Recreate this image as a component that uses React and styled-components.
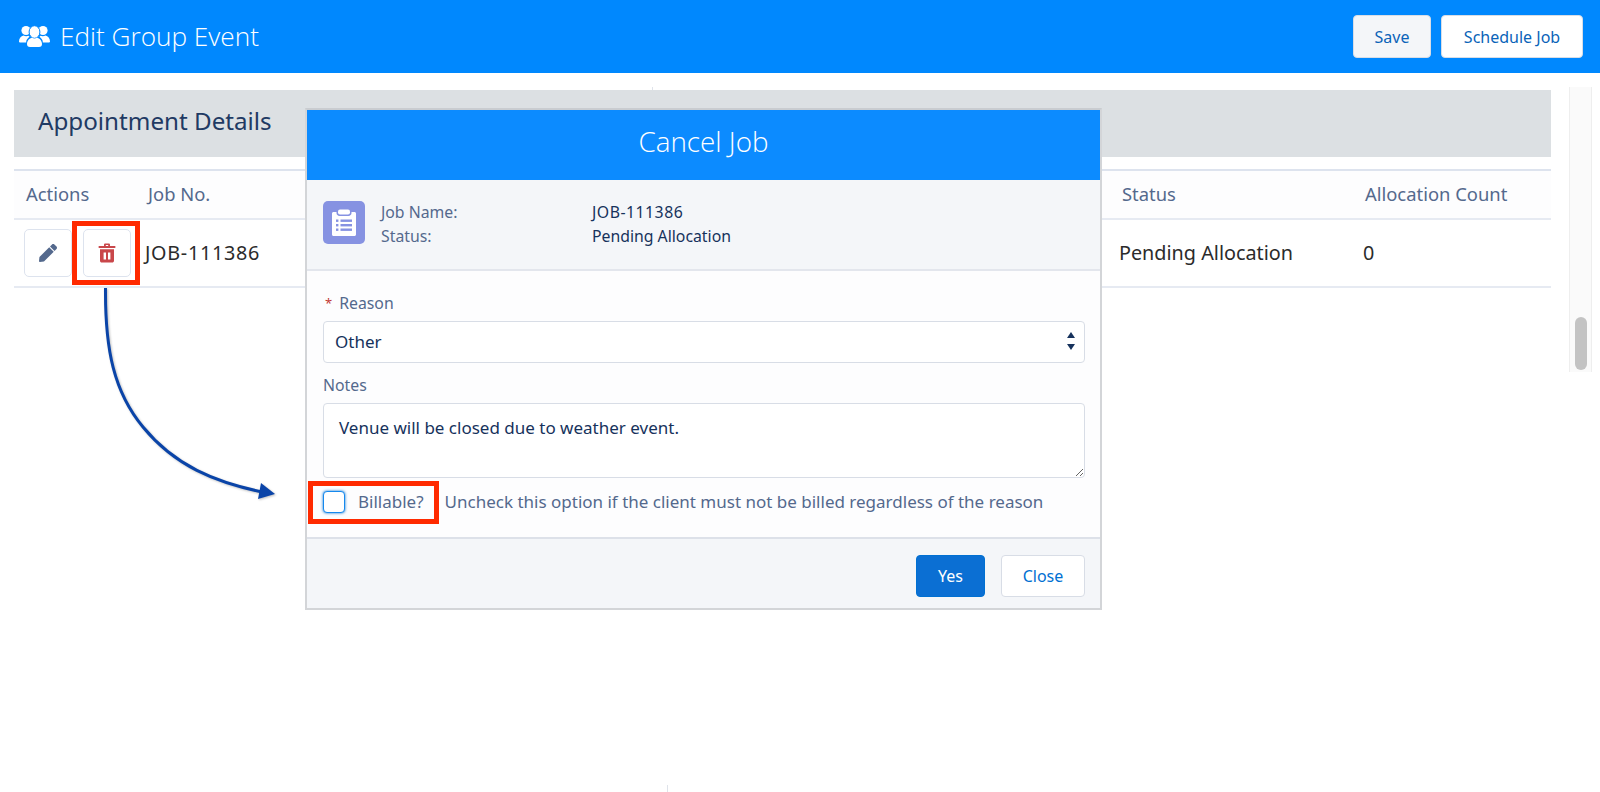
import React from "react";
import styled, { createGlobalStyle } from "styled-components";
import { FaPen } from "react-icons/fa";

const GlobalStyle = createGlobalStyle`
  html, body {
    margin: 0;
    padding: 0;
    background: #fff;
    font-family: "Noto Sans", "Open Sans", sans-serif;
  }
  * { box-sizing: border-box; }
`;

const Page = styled.div`
  position: relative;
  width: 1600px;
  height: 792px;
  overflow: hidden;
`;

const TopBar = styled.header`
  height: 73px;
  background: #0088fe;
  display: flex;
  align-items: center;
  justify-content: space-between;
  padding: 0 17px 0 18px;
`;

const TopTitle = styled.div`
  display: flex;
  align-items: center;
  gap: 9px;
  color: #fff;
  font-family: "Open Sans", sans-serif;
  font-weight: 300;
  font-size: 26.2px;
  line-height: 36px;
  padding-bottom: 2px;
`;

const TopActions = styled.div`
  display: flex;
  gap: 10px;
`;

const TopButton = styled.button`
  height: 43px;
  width: ${(p) => p.$width}px;
  border: 1px solid #d8dde6;
  border-radius: 4px;
  background: ${(p) => (p.$muted ? "#f4f6f9" : "#fff")};
  color: #0a63b8;
  font-family: inherit;
  font-size: 16px;
`;

const Main = styled.main`
  display: flex;
  padding: 17px 8px 0 14px;
`;

const Content = styled.section`
  width: 1537px;
`;

const SectionBar = styled.div`
  height: 67px;
  background: #dce0e3;
  display: flex;
  align-items: center;
  padding: 0 0 7px 24px;
  color: #1f3a63;
  font-size: 24.2px;
`;

const Table = styled.div`
  margin-top: 12px;
`;

const Row = styled.div`
  display: grid;
  grid-template-columns: 122px 974px 244px 1fr;
  align-items: center;
  height: ${(p) => p.$height}px;
  background: ${(p) => p.$bg || "#fff"};
  border-top: ${(p) => (p.$topLine ? "2px solid #dde3ee" : "none")};
  border-bottom: 2px solid #e6eaf2;
`;

const HeadCell = styled.div`
  color: #54698d;
  font-size: 18.4px;
  padding-left: ${(p) => p.$pad}px;
  padding-bottom: 2px;
`;

const BodyCell = styled.div`
  color: #2b2b2b;
  font-size: 19.8px;
  letter-spacing: ${(p) => (p.$spaced ? "0.7px" : "0")};
  padding-left: ${(p) => p.$pad}px;
  padding-bottom: 2px;
  display: flex;
  gap: 11px;
  align-items: center;
`;

const IconButton = styled.div`
  width: 48px;
  height: 48px;
  flex: none;
  margin-top: 2px;
  border: 1px solid #dde3ee;
  border-radius: 5px;
  background: #fff;
  display: flex;
  align-items: center;
  justify-content: center;
  color: ${(p) => p.$color};
`;

const Scrollbar = styled.div`
  width: 23px;
  height: 285px;
  margin-left: 18px;
  margin-top: -3px;
  background: #fafafa;
  border-left: 1px solid #eee;
  border-right: 1px solid #eee;
  display: flex;
  justify-content: center;
  align-items: flex-end;
  padding-bottom: 2px;
`;

const ScrollThumb = styled.div`
  width: 12px;
  height: 53px;
  border-radius: 6px;
  background: #c3c3c3;
`;

const Modal = styled.div`
  position: absolute;
  left: 305px;
  top: 108px;
  width: 797px;
  height: 502px;
  border: 2px solid #d3d5d8;
  border-top-color: #c9ccd0;
  background: #fdfdfe;
  display: flex;
  flex-direction: column;
`;

const ModalHead = styled.div`
  height: 70px;
  flex: none;
  background: #0c8bff;
  color: #fff;
  display: flex;
  align-items: center;
  justify-content: center;
  padding-bottom: 8px;
  font-family: "Open Sans", sans-serif;
  font-weight: 300;
  font-size: 27.8px;
`;

const InfoStrip = styled.div`
  height: 91px;
  flex: none;
  background: #f4f6f9;
  border-bottom: 2px solid #e3e6ed;
  display: flex;
  align-items: flex-start;
  padding: 21px 0 0 16px;
`;

const InfoIcon = styled.div`
  width: 42px;
  height: 43px;
  border-radius: 5px;
  background: #8692e2;
  display: flex;
  align-items: center;
  justify-content: center;
  flex: none;
`;

const InfoGrid = styled.div`
  display: grid;
  grid-template-columns: 211px auto;
  grid-auto-rows: 24px;
  margin-left: 16px;
  margin-top: -1px;
  font-size: 15.8px;
  align-items: center;
`;

const InfoLabel = styled.div`
  color: #54698d;
`;

const InfoValue = styled.div`
  color: #16325c;
  letter-spacing: ${(p) => (p.$spaced ? "0.5px" : "0")};
`;

const Form = styled.div`
  flex: 1;
  display: flex;
  flex-direction: column;
  padding: 22px 15px 0 16px;
  position: relative;
`;

const FieldLabel = styled.label`
  display: flex;
  gap: 7px;
  height: 20px;
  align-items: center;
  color: #54698d;
  font-size: 15.8px;
`;

const Required = styled.span`
  color: #c23934;
  font-size: 13px;
  margin-left: 2px;
`;

const SelectBox = styled.div`
  height: 42px;
  margin-top: 8px;
  margin-bottom: 12px;
  border: 1px solid #d8dde6;
  border-radius: 4px;
  background: #fff;
  display: flex;
  align-items: center;
  justify-content: space-between;
  padding: 0 8px 2px 11px;
  color: #16325c;
  font-size: 17px;
`;

const NotesArea = styled.textarea`
  display: block;
  height: 75px;
  margin-top: 8px;
  border: 1px solid #d8dde6;
  border-radius: 4px;
  background: #fff;
  padding: 12px 15px;
  color: #16325c;
  font-family: inherit;
  font-size: 17px;
  resize: vertical;
  outline: none;
`;

const CheckRow = styled.div`
  display: flex;
  align-items: center;
  margin-top: 12px;
  color: #54698d;
  font-size: 17px;
  white-space: nowrap;
`;

const CheckBox = styled.span`
  width: 22px;
  height: 22px;
  flex: none;
  border: 1px solid #1589ee;
  border-radius: 4px;
  background: #fff;
  box-shadow: 0 0 3px #0070d2;
`;

const BillableText = styled.span`
  margin-left: 13px;
  margin-bottom: 1px;
`;

const HintText = styled.span`
  margin-left: 21px;
  margin-bottom: 1px;
`;

const ModalFoot = styled.div`
  height: 71px;
  flex: none;
  background: #f4f6f9;
  border-top: 2px solid #dde1e9;
  display: flex;
  align-items: center;
  justify-content: flex-end;
  gap: 16px;
  padding: 4px 15px 0;
`;

const FootButton = styled.button`
  height: 42px;
  width: ${(p) => p.$width}px;
  border-radius: 4px;
  border: 1px solid ${(p) => (p.$primary ? "#0070d2" : "#d8dde6")};
  background: ${(p) => (p.$primary ? "#0b6fd3" : "#fff")};
  color: ${(p) => (p.$primary ? "#fff" : "#0070d2")};
  font-family: inherit;
  font-size: 16px;
`;

// red call-out frames and the arrow sit over the screenshot
const Callout = styled.div`
  position: absolute;
  left: ${(p) => p.$x}px;
  top: ${(p) => p.$y}px;
  width: ${(p) => p.$w}px;
  height: ${(p) => p.$h}px;
  border: 5px solid #ff2a00;
`;

const ArrowLayer = styled.svg`
  position: absolute;
  left: 90px;
  top: 280px;
  overflow: visible;
  filter: drop-shadow(1px 1px 1px rgba(0, 0, 0, 0.25));
`;

const Tick = styled.div`
  position: absolute;
  left: ${(p) => p.$x}px;
  top: ${(p) => p.$y}px;
  width: 1px;
  height: ${(p) => p.$h}px;
  background: #dfe3ea;
`;

const GroupIcon = () => (
  <svg width="33" height="24" viewBox="0 0 33 24" fill="#fff">
    <circle cx="8" cy="6.500" r="4.600" />
    <path d="M1 17.500c0-3.500 2-5.500 4.500-6 1.500.8 3.500.8 5 .2l1 1c-2 1.500-3.300 3.300-3.300 5.300v.5H2.500c-.9 0-1.500-.4-1.500-1z" />
    <circle cx="25" cy="6.500" r="4.600" />
    <path d="M32 17.500c0-3.500-2-5.500-4.500-6-1.500.8-3.500.8-5 .2l-1 1c2 1.500 3.300 3.300 3.300 5.300v.5h5.700c.9 0 1.500-.4 1.500-1z" />
    <ellipse cx="16.500" cy="8" rx="5.400" ry="6.300" stroke="#0088fe" strokeWidth="1" />
    <path d="M9 20c0-3.500 2.500-5.700 5-6.300 1.600.9 3.400.9 5 0 2.500.6 5 2.800 5 6.300 0 1.800-1 3-3 3H12c-2 0-3-1.200-3-3z" />
  </svg>
);

const TrashIcon = () => (
  <svg width="18" height="20" viewBox="0 0 18 20" fill="#c9474a">
    <rect x="0.500" y="3" width="17" height="2" rx="0.800" />
    <path d="M6 3V1.600C6 .9 6.600.4 7.200.4h3.600c.6 0 1.200.5 1.200 1.200V3h-1.800V2H7.800v1z" />
    <path
      fillRule="evenodd"
      d="M2 6.200h14v11.600c0 1-.8 1.800-1.800 1.800H3.800c-1 0-1.800-.8-1.800-1.800zM5.600 9.400v7.200h2.400V9.400zm4.400 0v7.200h2.400V9.400z"
    />
  </svg>
);

const ClipboardIcon = () => (
  <svg width="26" height="28" viewBox="0 0 26 28" fill="#fff">
    <rect x="7" y="0.500" width="12" height="5" rx="2" />
    <path d="M2.500 3H5.500v1c0 1.600 1.300 3 3 3h9c1.700 0 3-1.400 3-3V3h3c.8 0 1.500.7 1.500 1.500v21c0 .8-.7 1.500-1.500 1.500h-21C1.700 27 1 26.300 1 25.500v-21C1 3.700 1.700 3 2.500 3z" />
    <g fill="#8692e2">
      <rect x="5" y="10.500" width="2.400" height="2.400" />
      <rect x="9.500" y="10.500" width="11.500" height="2.400" />
      <rect x="5" y="15" width="2.400" height="2.400" />
      <rect x="9.500" y="15" width="11.500" height="2.400" />
      <rect x="5" y="19.500" width="2.400" height="2.400" />
      <rect x="9.500" y="19.500" width="11.500" height="2.400" />
    </g>
  </svg>
);

const SortArrows = () => (
  <svg width="10" height="20" viewBox="0 0 10 20" fill="#16325c">
    <path d="M5 1l4 6H1z" />
    <path d="M5 19l4-6H1z" />
  </svg>
);

function App() {
  return (
    <Page>
      <GlobalStyle />
      <TopBar>
        <TopTitle>
          <GroupIcon />
          Edit Group Event
        </TopTitle>
        <TopActions>
          <TopButton $muted $width={78}>Save</TopButton>
          <TopButton $width={142}>Schedule Job</TopButton>
        </TopActions>
      </TopBar>

      <Main>
        <Content>
          <SectionBar>Appointment Details</SectionBar>
          <Table>
            <Row $height={51} $topLine $bg="#fdfdfe">
              <HeadCell $pad={12}>Actions</HeadCell>
              <HeadCell $pad={12}>Job No.</HeadCell>
              <HeadCell $pad={12}>Status</HeadCell>
              <HeadCell $pad={11}>Allocation Count</HeadCell>
            </Row>
            <Row $height={68}>
              <BodyCell $pad={10}>
                <IconButton $color="#54698d"><FaPen size={18} /></IconButton>
                <IconButton $color="#c23934"><TrashIcon /></IconButton>
              </BodyCell>
              <BodyCell $pad={9} $spaced>JOB-111386</BodyCell>
              <BodyCell $pad={9}>Pending Allocation</BodyCell>
              <BodyCell $pad={9}>0</BodyCell>
            </Row>
          </Table>
        </Content>
        <Scrollbar>
          <ScrollThumb />
        </Scrollbar>
      </Main>

      <Modal>
        <ModalHead>Cancel Job</ModalHead>
        <InfoStrip>
          <InfoIcon><ClipboardIcon /></InfoIcon>
          <InfoGrid>
            <InfoLabel>Job Name:</InfoLabel>
            <InfoValue $spaced>JOB-111386</InfoValue>
            <InfoLabel>Status:</InfoLabel>
            <InfoValue>Pending Allocation</InfoValue>
          </InfoGrid>
        </InfoStrip>
        <Form>
          <FieldLabel><Required>*</Required>Reason</FieldLabel>
          <SelectBox>
            Other
            <SortArrows />
          </SelectBox>
          <FieldLabel>Notes</FieldLabel>
          <NotesArea readOnly defaultValue="Venue will be closed due to weather event." />
          <CheckRow>
            <CheckBox />
            <BillableText>Billable?</BillableText>
            <HintText>Uncheck this option if the client must not be billed regardless of the reason</HintText>
          </CheckRow>
        </Form>
        <ModalFoot>
          <FootButton $primary $width={69}>Yes</FootButton>
          <FootButton $width={84}>Close</FootButton>
        </ModalFoot>
      </Modal>

      <Callout $x={72} $y={221} $w={68} $h={64} />
      <Callout $x={308} $y={481} $w={131} $h={43} />

      <ArrowLayer width="190" height="225" viewBox="0 0 190 225">
        <path
          d="M15.500 8C15 70 24 112 53 147C85 186 125 202 172 212"
          fill="none"
          stroke="#0a44a8"
          strokeWidth="3"
        />
        <path d="M185 214L171 203L168 219z" fill="#0a44a8" />
      </ArrowLayer>

      <Tick $x={652} $y={87} $h={3} />
      <Tick $x={667} $y={785} $h={7} />
    </Page>
  );
}

export default App;
